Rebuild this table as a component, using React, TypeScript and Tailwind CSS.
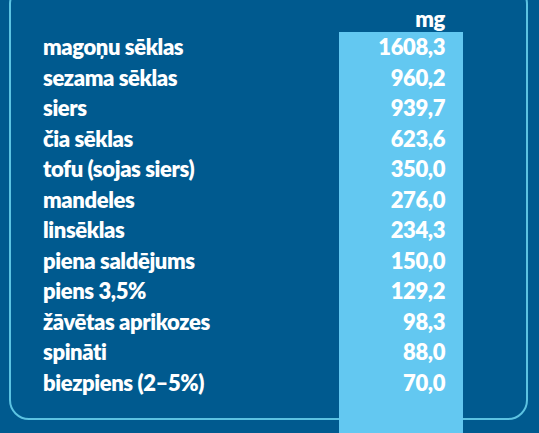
import React from "react";

const rows: [string, string][] = [
  ["magoņu sēklas", "1608,3"],
  ["sezama sēklas", "960,2"],
  ["siers", "939,7"],
  ["čia sēklas", "623,6"],
  ["tofu (sojas siers)", "350,0"],
  ["mandeles", "276,0"],
  ["linsēklas", "234,3"],
  ["piena saldējums", "150,0"],
  ["piens 3,5%", "129,2"],
  ["žāvētas aprikozes", "98,3"],
  ["spināti", "88,0"],
  ["biezpiens (2–5%)", "70,0"],
];

export default function App() {
  return (
    <div
      className="relative w-[539px] h-[433px] overflow-hidden bg-[#005a8f] text-white font-extrabold text-[22px] tracking-[-0.4px]"
      style={{ fontFamily: "Lato, 'Open Sans', sans-serif" }}
    >
      <div className="ml-[9px] mt-[-16px] w-[519px] h-[436px] rounded-[20px] border-2 border-[#5cc3e2] flex pt-[22px] pb-[20px]">
        <div className="flex-1 flex flex-col pl-[32px] pt-[24px]">
          {rows.map(([name]) => (
            <div key={name} className="h-[30.5px] leading-[30.5px] whitespace-nowrap">
              {name}
            </div>
          ))}
        </div>
        <div className="w-[124px] mr-[63px] flex flex-col">
          <div className="h-[24px] leading-[22px] text-right pr-[18px]">mg</div>
          <div className="flex-1 -mb-[40px] bg-[#63c8f1] pr-[18px]">
            {rows.map(([name, v]) => (
              <div key={name} className="h-[30.5px] leading-[30.5px] text-right">
                {v}
              </div>
            ))}
          </div>
        </div>
      </div>
    </div>
  );
}
